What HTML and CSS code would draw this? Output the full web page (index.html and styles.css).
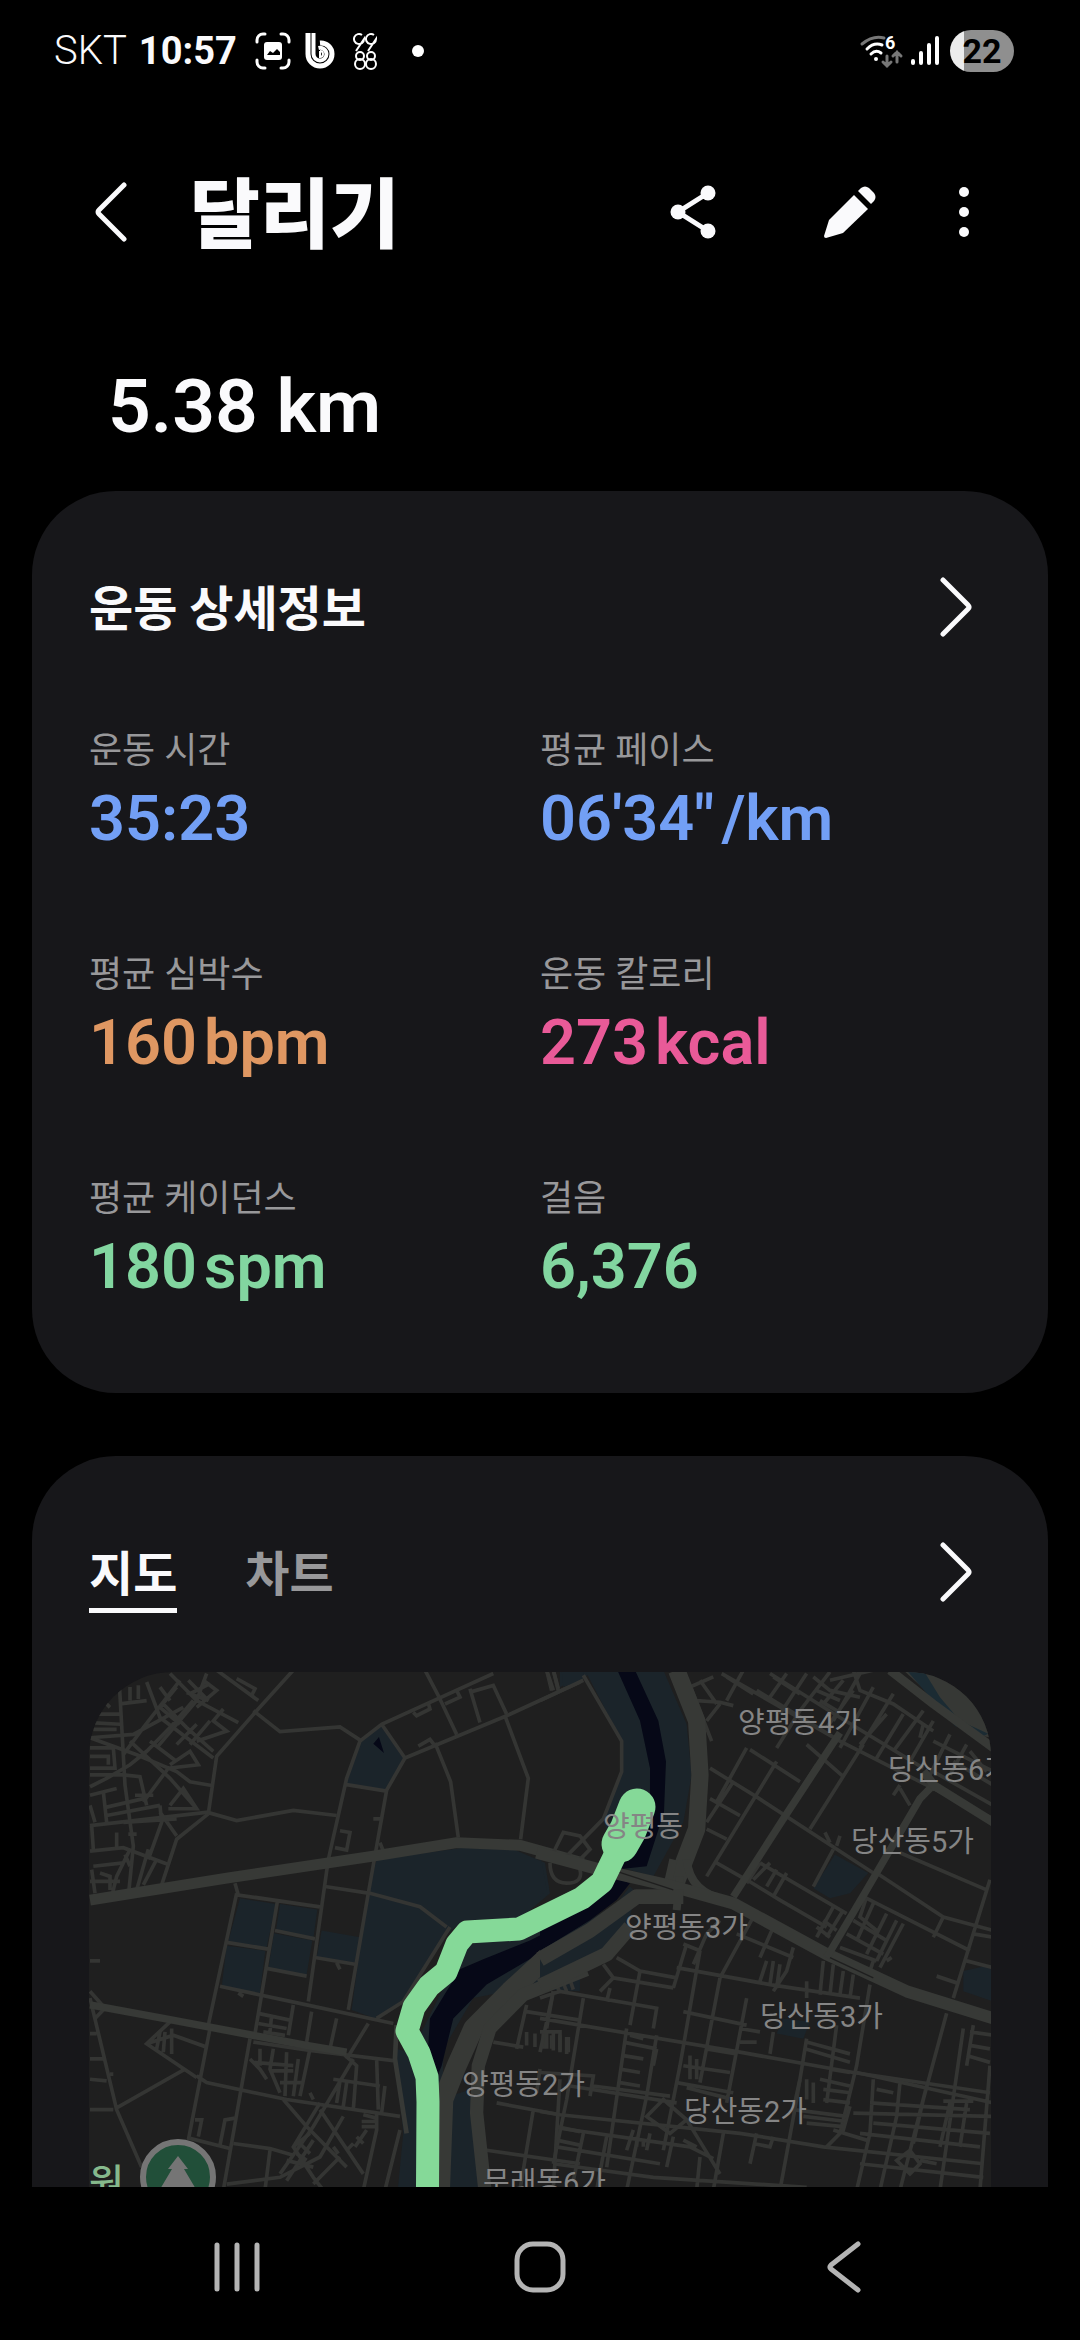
FILE: index.html
```html
<!DOCTYPE html>
<html lang="ko">
<head>
    <meta charset="utf-8">
    <meta name="viewport" content="width=device-width, initial-scale=1">
    <title>달리기</title>
<link rel="stylesheet" href="styles.css">
</head>
<body>
<div class="status">
    <span class="carrier">SKT</span>
    <span class="clock">10:57</span>
    <svg class="st-capture" width="36" height="38" viewBox="0 0 36 38" fill="none" stroke="#fff" stroke-width="3" stroke-linecap="round">
        <path d="M2 10V8a6 6 0 0 1 6-6h2M26 2h2a6 6 0 0 1 6 6v2M34 28v2a6 6 0 0 1-6 6h-2M10 36H8a6 6 0 0 1-6-6v-2"/>
        <rect x="9" y="10" width="18" height="18" rx="3" fill="#fff" stroke="none"/>
        <path d="M12 23l3-4 3 2 4-4 3 3v3z" fill="#000" stroke="none"/>
    </svg>
    <svg class="st-b" width="30" height="38" viewBox="0 0 30 38" fill="none" stroke="#fff">
        <path d="M3 1v21a12 12 0 0 0 24 0a11 11 0 0 0-12-11" stroke-width="5"/>
        <path d="M8.500 1v21a6.500 6.500 0 0 0 13 0a6.500 6.500 0 0 0-8-6" stroke-width="4"/>
        <path d="M15 19v6a3 3 0 0 0 0-6" stroke-width="2"/>
    </svg>
    <svg class="st-99" width="25" height="38" viewBox="0 0 25 38" fill="none" stroke="#fff" stroke-width="2">
        <path d="M9 3a5 5 0 1 0 2 4L3 19M21 3a5 5 0 1 0 2 4L15 19"/>
        <circle cx="7" cy="24" r="4"/><circle cx="7" cy="32" r="5"/>
        <circle cx="18" cy="24" r="4"/><circle cx="18" cy="32" r="5"/>
    </svg>
    <i class="dot"></i>
    <svg class="st-wifi" width="42" height="34" viewBox="0 0 42 34" fill="none" stroke-linecap="round">
        <path d="M2 10Q13 1 24 4" stroke="#777" stroke-width="3"/>
        <path d="M7 15Q14 8 22 11M11 20Q16 15 21 19" stroke="#fff" stroke-width="3"/>
        <circle cx="16" cy="25" r="2" fill="#fff"/>
        <path d="M27 22v10M23 28l4 4 4-4M37 28V18M33 22l4-4 4 4" stroke="#777" stroke-width="3"/>
        <text x="25" y="15" class="six">6</text>
    </svg>
    <svg class="st-bars" width="28" height="30" viewBox="0 0 28 30" stroke="#fff" stroke-width="4" stroke-linecap="round">
        <path d="M2 25v2M10 17v10M18 9v18M26 2v25"/>
    </svg>
    <span class="battery">22</span>
</div>

<header class="appbar">
    <button class="icon back" aria-label="뒤로">
        <svg width="32" height="60" viewBox="0 0 32 60" fill="none" stroke="#fafafc" stroke-width="5" stroke-linecap="round" stroke-linejoin="round"><path d="M29 3L4 28q-2 2 0 4L29 57"/></svg>
    </button>
    <h1>달리기</h1>
    <button class="icon share" aria-label="공유">
        <svg width="46" height="54" viewBox="0 0 46 54" fill="#fafafc"><path d="M38 8L8 27l30 19" fill="none" stroke="#fafafc" stroke-width="5"/><circle cx="38" cy="8" r="7.500"/><circle cx="8" cy="27" r="7.500"/><circle cx="38" cy="46" r="7.500"/></svg>
    </button>
    <button class="icon edit" aria-label="편집">
        <svg width="52" height="52" viewBox="0 0 52 52" fill="#fafafc"><path d="M30 9L44 23 19 47 2 52Q0 52 0 50L5 34z"/><path d="M34 5l3-3q4-3 8 0l5 5q3 4 0 8l-3 3z"/></svg>
    </button>
    <button class="icon more" aria-label="더보기">
        <svg width="12" height="52" viewBox="0 0 12 52" fill="#fafafc"><circle cx="6" cy="6" r="5"/><circle cx="6" cy="26" r="5"/><circle cx="6" cy="46" r="5"/></svg>
    </button>
</header>

<main>
<p class="distance">5.38 km</p>

<section class="card">
    <div class="card-head">
        <h2>운동 상세정보</h2>
        <a class="go" href="#detail" aria-label="운동 상세정보">
            <svg width="32" height="60" viewBox="0 0 32 60"><path d="M3 3l25 25q2 2 0 4L3 57"/></svg>
        </a>
    </div>
    <dl class="stats">
        <div><dt>운동 시간</dt><dd class="blue">35:23</dd></div>
        <div><dt>평균 페이스</dt><dd class="blue">06'34"<span>/km</span></dd></div>
        <div><dt>평균 심박수</dt><dd class="orange">160<span>bpm</span></dd></div>
        <div><dt>운동 칼로리</dt><dd class="pink">273<span>kcal</span></dd></div>
        <div><dt>평균 케이던스</dt><dd class="green">180<span>spm</span></dd></div>
        <div><dt>걸음</dt><dd class="green">6,376</dd></div>
    </dl>
</section>

<section class="card">
    <div class="card-head">
        <div class="tabs">
            <button class="tab on">지도</button>
            <button class="tab">차트</button>
        </div>
        <a class="go" href="#map" aria-label="지도">
            <svg width="32" height="60" viewBox="0 0 32 60"><path d="M3 3l25 25q2 2 0 4L3 57"/></svg>
        </a>
    </div>
    <svg class="map" viewBox="0 0 902 600">
        <rect width="902" height="600" fill="#1f1f1f"/>

        <!-- west side -->
        <g transform="translate(-9 -12) scale(.3333 .3381)">
            <g class="park">
                <path d="M905 195L970 290 920 385 795 365 840 240z"/>
                <path d="M890 590L1150 555 1300 560 1395 600 1410 690 1320 765 1150 770 1090 820 975 1000 890 1062 815 1035 860 700z"/>
                <path d="M480 705L588 722 560 850 445 832zM600 722L712 738 700 825 588 800zM440 845L556 860 540 985 425 968zM582 808L697 830 680 930 565 912zM725 800L840 820 825 895 710 880z"/>
                <path d="M945 1150L1090 1180 1080 1800H930L970 1400z"/>
                <path d="M1110 1290L1170 1270 1200 1568V1800H1090z"/>
                <path d="M1440 30H1560L1440 80z"/>
                <path d="M1150 850L1400 760 1500 740V980L1330 970 1180 1000 1090 1150 1010 1130z"/>
            </g>
            <path d="M1510 750L1350 830 1210 885 1140 915 1050 1060 1045 1140 1060 1260 1085 1200 1120 1060 1220 960 1340 890 1510 800zM1075 1440L1100 1440 1090 1800H1075zM897 228L912 275 880 248z" class="river"/>
            <g class="road">
                <path d="M640 30L530 150 410 285 385 455 290 530 245 665M520 150L600 212 780 198 845 240M410 30L535 120M470 55L525 85 515 105M1035 30L1075 105 1130 220M1240 40L905 190 840 240 800 350 745 590 685 1010M905 190L975 290 920 385 865 690 805 1035M795 368L920 388M975 290L1280 165 1500 65M1065 245L1112 360 1135 525M1275 165L1345 350 1322 530M1400 30L1415 90M1420 30L1435 90"/>
                <path d="M1170 95L1240 75 1280 160M1170 85L1200 185M1095 130L1140 110 1130 90M1000 155L1010 165 1050 145 1045 128M1015 255L1050 235 1062 250M380 450L470 475 640 445 770 460M780 505L810 510 800 562 765 555M880 470H900M900 540L910 565"/>
                <path d="M400 372L330 360 290 330 170 280 30 230M30 490L385 450M190 420L265 320 355 310 330 270 270 310M30 565L130 555 265 605M40 610L130 600M30 655H120"/>
                <path d="M118 70L135 370 160 550 145 700M90 80L120 80M200 65L240 170 400 290M300 60L190 200 130 280M270 40L350 120 475 185M380 40L350 120 230 260M325 60L385 120 330 100 390 70M430 145L400 180 440 210 350 240M120 130L200 120M30 160H120M30 185L120 190M30 230L160 220 310 140M30 260H100L105 320H30M30 285H85V310M40 205H110M370 60L410 90 350 140M150 80V120M175 75V115M60 110L90 140M95 90L80 120M240 80L270 120"/>
                <path d="M30 375L80 350 150 310 200 270 270 200 340 120M30 400L110 380M70 390L80 480M80 435L190 410M80 460L240 430M30 340H130M130 340L180 345 200 430M240 430L245 480 205 590M240 450L290 520M265 440L350 440 310 380 270 430M130 480L290 470M150 560L110 640 95 700M205 560L170 680M230 590L190 665M150 240L270 350 350 440M210 240L290 300M250 130L320 200 400 270M290 80L240 140 300 190M350 190L290 250M390 180L330 250M165 400H220M145 515H170M135 575L150 610M110 510V560M35 620L45 690M60 630L90 640V680M35 490L40 560M30 430L45 480"/>
                <path d="M465 660L475 695 720 730M470 690L385 1080M592 715L525 1105M440 835L565 855M585 800L705 825M560 912L680 935M420 965L680 1020 940 1075M705 880L825 900M770 895L780 915M735 670L870 690 1020 730 1100 790M1110 790L970 1010 890 1060M475 985L490 995M30 890H60"/>
                <path d="M640 1020L625 1110M695 1040L680 1130M770 1060L750 1150M865 1075L800 1180M535 1045L630 1065M535 1075L620 1090M550 1100L615 1110M575 1050L570 1100M30 980L75 1030 45 1060M30 1000L110 1330 185 1500M270 1070L200 1135 350 1235M200 1135L280 1110 380 1145M240 1100L230 1150M255 1100L250 1160M275 1090L275 1165M110 1325L315 1210M30 1330H100M30 1180H70M30 1105H50M30 1240L80 1245M90 1225H100"/>
                <path d="M390 1090L325 1420M510 1120L430 1568M350 1230L380 1250 620 1300 960 1350M520 1130L690 1155 940 1185M820 1180L700 1380 600 1520M510 1180L540 1210 560 1240M520 1190L640 1200M540 1150V1200M580 1150L570 1210 600 1280M620 1160L615 1290M655 1180L640 1290M690 1150L660 1290M600 1250H670M570 1215H640M790 1165L830 1200 820 1330M780 1245L770 1310M800 1250L790 1320M760 1240L900 1260M890 1180L895 1330M915 1260L905 1340M690 1280L700 1300"/>
                <path d="M345 1360L365 1360 355 1410M330 1415L450 1445M465 1355L435 1360 420 1435M460 1430L570 1445 640 1465M570 1450L555 1568M610 1300L680 1380 800 1500M720 1310L640 1440 700 1530 730 1568M720 1330L850 1520M790 1350L720 1470 600 1530 440 1550M890 1340V1390L850 1568M850 1345L890 1355M845 1365H885M845 1380H885M860 1390L825 1440M830 1410L850 1430M820 1430L800 1450M640 1440L690 1400M650 1460L680 1480M660 1430L690 1460M620 1480L700 1500M760 1440L775 1460M960 1390L915 1568M700 1420L620 1540M780 1470L700 1550"/>
                <path d="M1240 1130L1330 1145M1250 1310L1440 1345M1220 1450L1500 1490M1360 1330L1320 1568M1440 1240L1420 1568M1340 1020L1310 1150M1340 1040L1500 1065M1420 980L1400 1090M1430 1380L1500 1395M1430 1420L1500 1435M1340 1100V1140M1365 1105V1145M1390 1105V1150M1415 1110V1150M1440 1110V1155M1465 1115V1160M1430 960L1440 985M1450 955L1460 980M1470 945L1480 975M1380 1210L1370 1280"/>
            </g>
            <g class="hiway">
                <path d="M30 710L440 645 880 580 1130 540 1320 548 1420 575 1510 600" stroke-width="32"/>
                <path d="M30 1020L250 1060 680 1140 800 1160" stroke-width="22"/>
                <path d="M1520 830L1400 880 1290 980 1180 1090 1130 1200 1090 1300 1080 1568 1075 1800" stroke-width="60"/>
                <path d="M1520 915L1330 990 1230 1090 1195 1200 1190 1340 1215 1568 1230 1800" stroke-width="40"/>
                <path d="M950 1080L945 1180 980 1400" stroke-width="14"/>
            </g>
        </g>

        <!-- east side -->
        <g transform="translate(451 -12) scale(.3333 .3381)">
            <g class="park">
                <path d="M135 30H370L440 190 455 340 430 480 340 640 230 610 190 470 245 330 245 240z"/>
                <path d="M65 30H130V60L70 80zM0 570L20 680 0 700zM270 670L230 720 0 860V950L180 870 260 790 290 690z"/>
                <path d="M885 575L985 630 930 690 870 705 820 675zM1270 920L1360 900V1010L1270 980zM730 1060L810 1070 790 1120 710 1105z"/>
            </g>
            <path d="M232 30L285 30 355 180 378 300 372 450 320 610 230 620 250 560 330 440 330 320 300 180zM230 645L270 660 230 710 150 770 0 860V790L150 720z" class="river"/>
            <path d="M1090 30H1360V230L1300 220z" fill="#363835"/>
            <path d="M1100 30H1150L1200 110 1260 180 1345 218 1330 225 1245 195 1170 110z" fill="#1b2b33"/>
            <g class="road">
                <path d="M130 45L245 240 245 330 190 470 60 600M0 120L130 60M20 30L40 90M40 30L55 85M450 80L520 50M470 120L540 125 580 135M450 75L515 240M480 60L530 130M500 180L540 130"/>
                <path d="M545 40L900 240 1360 470M690 40L900 170 1150 320M610 30L560 120M650 90L900 240M740 40L690 110M800 40L720 160M870 35L780 150 710 260M960 40L880 180M1000 80L900 260M1060 100L960 260M940 30L960 90 1060 130 1180 210M1000 30L870 60M820 50L870 90 960 110M830 90L900 120M840 120L890 150M1040 160L960 250M1090 160L1010 290M1150 150L1060 270M1180 180L1110 300M1230 220L1170 340M1280 250L1230 340M940 90L860 200M910 60L850 130M700 50L780 100M560 50L640 100M1180 330L1360 430M1150 190L1140 230M1180 240L1360 330M1240 300L1360 370M1290 270L1340 330"/>
                <path d="M620 260L530 420M710 300L500 640M630 265L780 360M800 250L910 345M510 320L650 405 1000 630M510 410L600 460M500 500L560 530M530 600L610 645M660 600L920 750M740 630L700 700M880 560L820 670M970 250L810 500M830 310L620 640M580 360L500 480M620 650L720 710 860 790M660 600L620 660M710 620L680 670M640 650L690 600M855 510L870 540M900 520L890 550M1080 380L1110 430M1060 400L1080 370"/>
                <path d="M1080 570L1340 680M1010 630L1210 760 1360 800M970 700L1290 860M1350 650L1240 1000M1210 760L1180 820M1300 810L1360 820M1280 890L1360 910M1190 935L1250 955M980 700L960 760 1010 800M1000 720L950 830M1040 750L980 870M1070 770L1010 890M1090 780L1020 910M940 770L1040 830M920 810L1030 870M900 850L1010 890M880 730L830 820M910 740L860 820M850 770L890 800M830 790L870 820M1000 890L990 920M1040 890L1055 880"/>
                <path d="M640 760L540 940M700 790L660 880M590 810L760 880M540 770L500 810 460 900M440 840L400 970M480 860L420 1200 370 1450M410 910L690 960 960 1000M430 840L480 860M230 880L300 920 410 940M190 900L220 940 180 980M300 920L270 1080M220 940L400 970M760 850L740 920 700 980M680 890L660 950M700 890L690 960M720 900L710 970M850 890L840 990M880 900L870 990M910 920L900 990M940 930L930 1000M800 950V1000M990 960L950 1200 900 1400"/>
                <path d="M0 1000L60 980 350 1030 340 1090M0 1060L600 1160 940 1220 1350 1280M130 1000L80 1300 40 1490M40 980L0 1160M210 970L200 1010M260 1090L200 1500M350 1110L320 1290 260 1568M430 1040L620 1080M540 940L480 1250M620 1000L560 1310M700 1100L690 1165M800 1120L770 1300 720 1568M890 1080L860 1310M250 1130L350 1150M250 1170L310 1180M240 1210L300 1220M240 1250L300 1260M270 1110L310 1120M350 1150L340 1200M500 1150L590 1165M450 1170V1240M470 1180V1240M430 1200L570 1220M410 1250L580 1280M440 1265L560 1295M600 1090L660 1100M600 1130H650M800 1130L930 1165M795 1150L930 1190M870 1210L930 1220"/>
                <path d="M0 1335L60 1345 600 1400 850 1440 1330 1490M0 1100H60V1160M20 1105V1150M40 1105V1155M80 1115V1165M0 1220L160 1230 150 1290M90 1260L410 1310M160 1260L390 1290M60 1385L450 1440 520 1475M50 1440L360 1490M40 1490L340 1530 800 1560M130 1400L100 1540M200 1410L170 1568M280 1390L260 1450M330 1400L320 1450M290 1410V1440M310 1415V1440M370 1300L440 1360 390 1400 320 1350zM440 1360L490 1440 540 1520M550 1400L520 1568M650 1400L630 1490M700 1410L690 1440 640 1430M480 1470L470 1568M400 1410L380 1500M430 1420L470 1440"/>
                <path d="M780 1240L760 1330 920 1350M800 1240V1300M820 1250V1310M840 1240L930 1260M850 1270L930 1280M850 1300L930 1310M800 1370L910 1380M790 1350L920 1365M930 1320L910 1390 860 1440M950 1220L1360 1310M1000 1240L990 1400 950 1568M1080 1250L1070 1350 1020 1568M1160 1260L1080 1568M1220 1045L1150 1300 1120 1430M1270 1090L1200 1568M1350 1200L1320 1568M1300 1080L1280 1200M1290 1100L1360 1110M1290 1140L1350 1150M1280 1170L1350 1190M940 1340L1360 1350M990 1310L1290 1330M1000 1370L1350 1400M960 1400L1320 1440M960 1490L1330 1530M1070 1480L1110 1450 1140 1490 1110 1520zM1140 1480L1190 1490M1210 1305H1300M880 1390L980 1420M1010 1270L1060 1280M1230 1310L1200 1440M1280 1310L1260 1440"/>
                <path d="M40 570L70 510 120 520 150 560 110 600M30 600Q30 660 80 660T120 620"/>
            </g>
            <g class="hiway">
                <path d="M410 30L470 180 480 340 470 500 400 680" stroke-width="52"/>
                <path d="M440 590Q450 690 560 710M400 590L370 720M420 640L410 740" stroke-width="24"/>
                <path d="M-10 570L200 625 400 670 580 720 860 870 1100 980 1360 1060" stroke-width="36"/>
                <path d="M0 885L150 800 290 700 430 700M0 965L200 870 270 790" stroke-width="44"/>
                <path d="M900 215L730 470 580 700M1180 370L1140 410 980 680 860 880" stroke-width="22"/>
                <path d="M1050 30L1180 130 1360 260M1180 370L1360 480M1150 330L1190 380" stroke-width="26"/>
            </g>
            <path d="M230 625L400 680M870 880L1000 940" stroke="#1f1f1f" stroke-width="4"/>
        </g>

        <!-- 달린 경로 -->
        <path class="route" d="M548 135L540 165 530 175 513 210 493 226 430 257 378 260 368 272 357 300 340 314 325 335 318 359 330 381 338 405 339 430 338 600"/>
        <path class="route tip" d="M548 135L539 158 531 172"/>

        <g class="places">
            <text x="649" y="61">양평동4가</text>
            <text x="799" y="108">당산동6가</text>
            <text x="514" y="165">양평동</text>
            <text x="762" y="180">당산동5가</text>
            <text x="536" y="266">양평동3가</text>
            <text x="671" y="355">당산동3가</text>
            <text x="373" y="423">양평동2가</text>
            <text x="595" y="450">당산동2가</text>
            <text x="394" y="521">문래동6가</text>
        </g>
        <text class="park-name" x="0" y="524">원</text>
        <circle cx="89" cy="505" r="35" fill="#214f39" stroke="#757575" stroke-width="6"/>
        <path d="M89 484l10 13h-4l16 27H67l16-27h-4z" fill="#757575"/>
    </svg>
</section>
</main>

<nav class="navbar">
    <button aria-label="최근 앱"><svg width="48" height="52" viewBox="0 0 48 52"><path d="M4 4v44M24 4v44M44 4v44"/></svg></button>
    <button aria-label="홈"><svg width="52" height="52" viewBox="0 0 52 52"><rect x="3" y="3" width="46" height="46" rx="16"/></svg></button>
    <button aria-label="뒤로"><svg width="36" height="52" viewBox="0 0 36 52"><path d="M33 3L6 24q-2 2 0 4l27 21"/></svg></button>
</nav>
</body>
</html>
```

FILE: styles.css
```css
* {box-sizing: border-box;}
body {margin: 0; height: 100vh; display: flex; flex-direction: column; background: #000; color: #fafafc; font-family: Roboto, "Noto Sans CJK KR", sans-serif;}
h1, h2, p, dl, dd {margin: 0;}
button {background: none; border: 0; padding: 0; color: inherit; font: inherit;}
svg {display: block;}

.status {display: flex; align-items: center; flex: none; height: 102px; padding: 0 66px 0 54px; font-size: 40px; line-height: 48px;}
.carrier {font-weight: 300;}
.clock {font-size: 38px; font-weight: 700; margin-left: 12px;}
.st-capture {margin-left: 18px;}
.st-b {margin-left: 14px;}
.st-99 {margin-left: 18px;}
.dot {width: 12px; height: 12px; margin-left: 34px; border-radius: 50%; background: #fff;}
.st-wifi {margin-left: auto; overflow: visible;}
.six {font-size: 18px; font-weight: 700; fill: #fff;}
.st-bars {margin: 0 11px 0 9px;}
.battery {width: 64px; height: 42px; border-radius: 21px; background: linear-gradient(to right, #ececec 22%, #8f8f8f 22%); color: #000; font-size: 34px; font-weight: 700; line-height: 42px; text-align: center;}

.appbar {display: flex; align-items: center; flex: none; height: 220px; padding: 0 110px 0 95px;}
h1 {flex: 1; margin-left: 63px; padding-top: 8px; font-size: 76px; line-height: 100px; font-weight: 900;}
.edit {margin-left: 108px;}
.more {margin-left: 82px;}

main {flex: 1; min-height: 0; overflow: hidden; padding: 0 32px;}
.distance {margin: 34px 76px 35px; font-size: 75px; line-height: 100px; font-weight: 600;}
.card {margin-bottom: 63px; padding: 80px 57px 88px; border-radius: 84px; background: #17171a;}
.card-head {display: flex; justify-content: space-between; align-items: flex-start;}
h2, .tab {padding-top: 6px; font-size: 48px; line-height: 66px; font-weight: 700;}
.go {padding: 6px 19px 6px 0;}
.go path {fill: none; stroke: #fafafc; stroke-width: 5; stroke-linecap: round; stroke-linejoin: round;}

.stats {display: grid; grid-template-columns: 1fr 1fr; row-gap: 96px; margin-top: 86px;}
dt {margin-bottom: 8px; font-size: 36px; line-height: 44px; color: #98989a;}
dd {font-size: 63px; line-height: 76px; font-weight: 600;}
dd span {margin-left: 7px;}
.blue {color: #729ff5;}
.orange {color: #df9762;}
.pink {color: #e95a98;}
.green {color: #82d6a0;}

.tabs {display: flex; gap: 68px;}
.tab {color: #98989a; border-bottom: 5px solid transparent;}
.tab.on {color: #fafafc; border-color: #fafafc;}

.map {width: 100%; margin-top: 59px; border-radius: 84px;}
.park {fill: #1b242a;}
.river {fill: #060817;}
.road {fill: none; stroke: #343533; stroke-width: 11;}
.hiway {fill: none; stroke: #373936; stroke-linejoin: round;}
.route {fill: none; stroke: #85d998; stroke-width: 23; stroke-linejoin: round;}
.route.tip {stroke-width: 37; stroke-linecap: round;}
.places {font-size: 29px; fill: #858585;}
.park-name {font-size: 38px; font-weight: 500; fill: #86b98c;}

.navbar {display: flex; align-items: center; flex: none; height: 153px; padding: 6px 86px 0;}
.navbar button {flex: 1; display: flex; justify-content: center;}
.navbar svg {fill: none; stroke: #b4b4b4; stroke-width: 5; stroke-linecap: round; stroke-linejoin: round;}
```
